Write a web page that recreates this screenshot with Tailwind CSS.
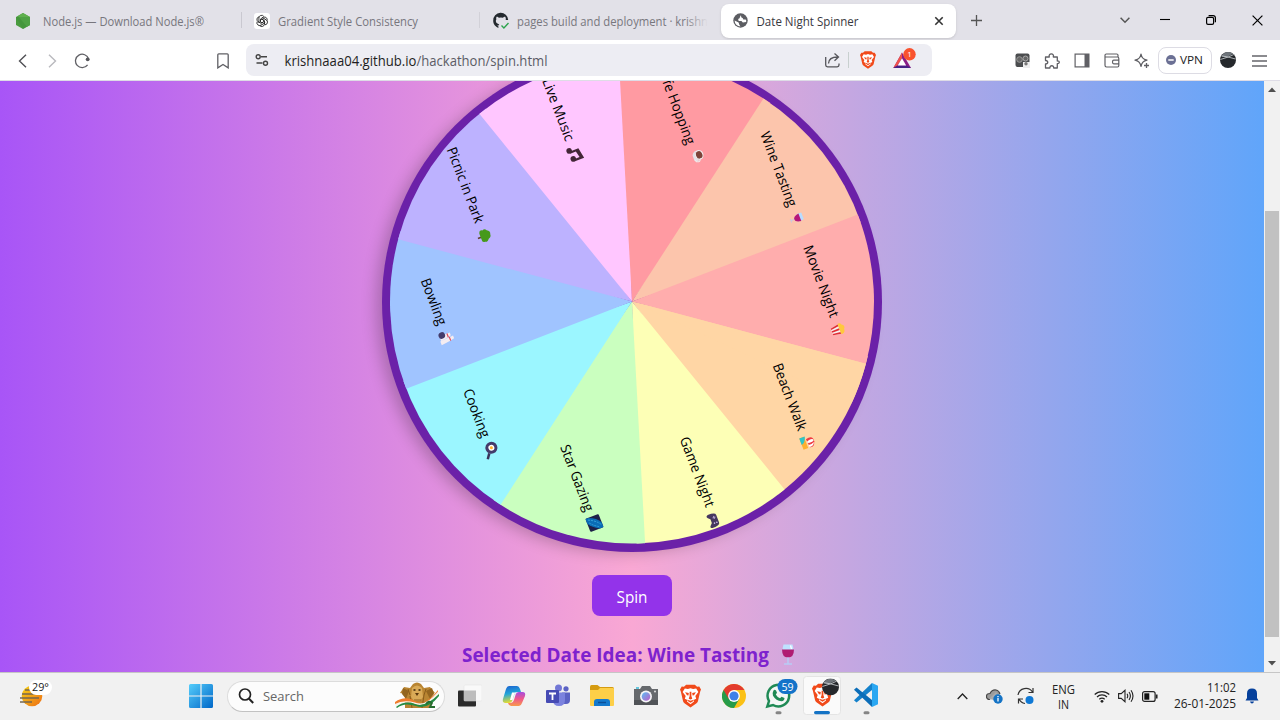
<!DOCTYPE html>
<html lang="en">
<head>
<meta charset="utf-8">
<title>Date Night Spinner</title>
<script src="https://cdn.jsdelivr.net/npm/@tailwindcss/browser@4"></script>
</head>
<body class="w-[1280px] h-[720px] overflow-hidden flex flex-col font-['Open_Sans','Noto_Sans',sans-serif] bg-white text-[#1b1b1f]">

<!-- Tab strip -->
<header class="h-10 shrink-0 flex items-center bg-[#e2e1e8] text-[12px] text-[#6d6c73]">
  <div class="w-[241px] h-10 flex items-center pl-[14px] pt-[2px]">
    <svg class="w-[18px] h-[18px] shrink-0" viewBox="0 0 18 18"><path d="M9 1l7 4v8l-7 4-7-4V5z" fill="#4a9b3f"/><path d="M9 1l7 4v8l-3 1.700L4 3.900z" fill="#5fb04e"/><path d="M2 5l7 12 7-4V5z" fill="#3d9139" opacity=".5"/></svg>
    <svg class="ml-[7px] w-[170px] h-5 overflow-visible" viewBox="0 0 170 20"><text x="4" y="14.500" font-size="12.300" fill="#77767d" textLength="161" lengthAdjust="spacingAndGlyphs">Node.js — Download Node.js®</text></svg>
  </div>
  <div class="w-px h-4 bg-[#c9c8d0]"></div>
  <div class="w-[237px] h-10 flex items-center pl-[12px] pt-[2px]">
    <svg class="w-4 h-4 shrink-0" viewBox="0 0 16 16"><rect width="16" height="16" rx="3" fill="#fff"/><g fill="none" stroke="#222" stroke-width=".85" stroke-linejoin="round"><g id="petal"><path d="M4.900 9.900V5A2.700 2.700 0 0 1 9.900 3.600M6.500 8.800V6L9.600 4.200A2.700 2.700 0 0 1 13.100 7.500"/></g><use href="#petal" transform="rotate(120 8 8)"/><use href="#petal" transform="rotate(240 8 8)"/><path d="M8 6.200l1.600.9v1.800L8 9.800l-1.600-.9V7.100z"/></g></svg>
    <svg class="ml-[8px] w-[150px] h-5 overflow-visible" viewBox="0 0 150 20"><text x="0" y="14.500" font-size="12.300" fill="#77767d" textLength="140" lengthAdjust="spacingAndGlyphs">Gradient Style Consistency</text></svg>
  </div>
  <div class="w-px h-4 bg-[#d2d1d8]"></div>
  <div class="w-[241px] h-10 flex items-center pl-[12px] pt-[2px]">
    <svg class="w-[18px] h-[18px] shrink-0" viewBox="0 0 18 18"><path d="M6.500 15.800C3.500 15 1.200 12 1.200 8.700A7.500 7.500 0 0 1 16.200 8h-2.500c.3-1.500 0-2.400-.5-3.200-1 0-1.900.6-2.300.9a8 8 0 0 0-4 0c-.4-.3-1.300-.9-2.300-.9-.5 1-.5 1.800-.2 2.400-1.400 2 .1 4.700 2.900 5-.4.4-.6.8-.7 1.300-.8.3-1.700.2-2.300-.9.500.1 1 2 2.200 1.900z" fill="#24292f"/><path d="M9.500 13.500l2.400 2.400 4.600-4.800" fill="none" stroke="#2da44e" stroke-width="1.400"/></svg>
    <svg class="ml-[6px] w-[196px] h-5 overflow-visible" viewBox="0 0 196 20"><defs><linearGradient id="fade"><stop offset=".88" stop-color="#77767d"/><stop offset="1" stop-color="#77767d" stop-opacity="0"/></linearGradient></defs><text x="1" y="14.500" font-size="12.300" fill="url(#fade)" textLength="191" lengthAdjust="spacingAndGlyphs">pages build and deployment · krishn</text></svg>
  </div>
  <div class="w-[235px] h-[34px] flex items-center rounded-lg bg-white pl-[12px] shadow-sm mt-px">
    <svg class="w-[15px] h-[15px] shrink-0" viewBox="0 0 16 16"><circle cx="8" cy="8" r="7.700" fill="#5c5d62"/><path d="M8.500 2.300C7.500 3.500 7.500 4.500 7 5.500L5.500 6.500 6 8.500h3L10.500 10l3.500-.5Q14.500 8 13.500 7H11l-.5-1.500L8.800 4.500zM1.700 8L6 10l.5 2 1.500 2.300A6.300 6.300 0 0 1 1.700 8z" fill="#fff"/></svg>
    <svg class="ml-[8px] w-[120px] h-5 overflow-visible" viewBox="0 0 120 20"><text x="0.500" y="14.500" font-size="12.300" fill="#38383e" textLength="102" lengthAdjust="spacingAndGlyphs">Date Night Spinner</text></svg>
    <svg class="ml-[58px] w-[10px] h-[10px]" viewBox="0 0 10 10"><path d="M1.300 1.300l7.400 7.400M8.700 1.300L1.300 8.700" stroke="#333" stroke-width="1.600"/></svg>
  </div>
  <svg class="ml-[15px] w-[11px] h-[11px]" viewBox="0 0 11 11"><path d="M5.500 0v11M0 5.500h11" stroke="#555" stroke-width="1.300"/></svg>
  <svg class="ml-[138px] w-[10px] h-[10px]" viewBox="0 0 10 10"><path d="M.6 2.800L5 7.200l4.400-4.400" fill="none" stroke="#555" stroke-width="1.500"/></svg>
  <svg class="ml-[30px] w-[10px] h-[10px]" viewBox="0 0 10 10"><path d="M0 4.500h10" stroke="#000" stroke-width="1.100"/></svg>
  <svg class="ml-[36px] w-[10px] h-[10px]" viewBox="0 0 10 10"><rect x=".6" y="2.400" width="7" height="7" rx="1.400" fill="none" stroke="#000" stroke-width="1.200"/><path d="M2.600.6h4.600A2.200 2.200 0 0 1 9.400 2.800v4.400" fill="none" stroke="#000" stroke-width="1.200"/></svg>
  <svg class="ml-[36px] w-[11px] h-[11px]" viewBox="0 0 11 11"><path d="M.6.600l9.800 9.800M10.400.600L.6 10.400" stroke="#000" stroke-width="1.200"/></svg>
</header>

<!-- Toolbar -->
<nav class="h-[41px] shrink-0 flex items-center bg-white border-b border-[#dedce6]">
  <div class="w-[246px] flex items-center pt-px">
    <svg class="ml-[18px] w-[9px] h-[14px]" viewBox="0 0 9 14"><path d="M8 .7L1.500 7 8 13.300" fill="none" stroke="#505055" stroke-width="1.400"/></svg>
    <svg class="ml-[21px] w-[9px] h-[14px]" viewBox="0 0 9 14"><path d="M1 .7L7.500 7 1 13.300" fill="none" stroke="#b9b9be" stroke-width="1.400"/></svg>
    <svg class="ml-[17px] w-[17px] h-[16px]" viewBox="0 0 17 16"><path d="M13.600 11.900A6.700 6.700 0 1 1 14.600 6" fill="none" stroke="#606065" stroke-width="1.300"/><circle cx="13.700" cy="6.300" r="1.900" fill="#55555a"/></svg>
    <svg class="ml-[126px] w-[12px] h-[16px]" viewBox="0 0 12 16"><path d="M.8 1.800q0-1 1-1h8.400q1 0 1 1v13.100L6 11.500.8 14.900z" fill="none" stroke="#606065" stroke-width="1.300"/></svg>
  </div>
  <div class="w-[686px] h-8 rounded-lg bg-[#ededf3] flex items-center">
    <svg class="ml-[9px] w-[14px] h-[14px]" viewBox="0 0 14 14"><g fill="none" stroke="#444" stroke-width="1.400"><circle cx="3.200" cy="3.800" r="2"/><path d="M5.800 3.800H12M1.500 10h6"/><circle cx="10.500" cy="10.200" r="2"/></g></svg>
    <svg class="ml-[15px] w-[280px] h-6 overflow-visible" viewBox="0 0 280 24"><text x="0.500" y="17.700" font-size="14" fill="#1e1e22" textLength="263" lengthAdjust="spacingAndGlyphs">krishnaaa04.github.io<tspan fill="#5c5c66">/hackathon/spin.html</tspan></text></svg>
    <svg class="ml-[260px] w-[17px] h-[16px]" viewBox="0 0 17 16"><path d="M1.700 5v8q0 1.800 1.800 1.800h9.700q1.800 0 1.800-1.800v-1.500M4.500 11.500c.2-4.700 3-6.500 9.200-6.500M10.500 1.500L14.500 5l-4 3.800" fill="none" stroke="#55555a" stroke-width="1.300"/></svg>
    <div class="ml-[7px] w-px h-4 bg-[#c8d0cf]"></div>
    <svg class="ml-[11px] w-[16px] h-[18px]" viewBox="0 0 24 26"><g id="lion"><path d="M7 0h10l2.500 2.300 2.500-.3L24 5.500l-1 2.700L20.500 19q-.5 1.700-2 2.700L12 26l-6.500-4.300q-1.500-1-2-2.700L1 8.200 0 5.500 2 2l2.500.3z" fill="#f14a1a"/><path d="M5.500 4.500L9 5l3-1 3 1 3.500-.5 2.500 4-3.500 4.500 1 3-3 1.500 .5 1.800L12 22.300l-4-3 .5-1.800-3-1.500 1-3L3 8.500z" fill="#fff"/><path d="M5.800 8.800l4.300.8L9.600 12.300 8 12zM18.200 8.800l-4.300.8.5 2.700 1.600-.3zM11 8h2v5l1 3-2 1-2-1 1-3zM8.200 17.200l3.800 1.300 3.800-1.300-1 1.700-2.800 1.800-2.800-1.800z" fill="#f14a1a"/></g></svg>
    <svg class="ml-[15px] w-[26px] h-[24px]" viewBox="0 0 26 24"><path d="M11 4.500L2.300 20H20z" fill="#8b1d86"/><path d="M11 4.500L2.300 20l4.200-2.400L11 10z" fill="#f0524b"/><path d="M2.300 20l4.200-2.400h9.200L20 20z" fill="#472286"/><path d="M11 10.300l-4.300 7.200h8.500z" fill="#fff"/><circle cx="18.500" cy="6.300" r="6.200" fill="#f9522e"/><text x="18.500" y="9.300" font-size="8" fill="#fff" text-anchor="middle">1</text></svg>
  </div>
  <div class="ml-[75px] flex pt-px">
    <div class="w-[30px] flex justify-center"><svg class="w-[15px] h-[15px]" viewBox="0 0 15 15"><rect x=".5" y=".5" width="14" height="13.500" rx="2" fill="#4b4d4f"/><circle cx="4.500" cy="6.500" r="2.800" fill="#666" stroke="#999"/><circle cx="10.500" cy="5.500" r="2.500" fill="#666" stroke="#aaa"/><path d="M8 9h7v6H8z" fill="#eee"/><circle cx="11" cy="10.700" r="1.700" fill="#777"/></svg></div>
    <div class="w-[30px] flex justify-center"><svg class="w-[16px] h-[16px]" viewBox="0 0 16 16"><path d="M1.500 4h3.800C4.600 1.800 6 .8 7.300.8s2.700 1 2 3.200h4v4c2.800-.5 2.500 3 0 2.600V15H9.700c.2-3-4-3-3.800 0H1.500v-4c3 0 3-3.500 0-3.500z" fill="none" stroke="#606065" stroke-width="1.300" stroke-linejoin="round"/></svg></div>
    <div class="w-[30px] flex justify-center"><svg class="w-[16px] h-[15px]" viewBox="0 0 16 15"><rect x="1.100" y="1.100" width="13.800" height="12.800" fill="none" stroke="#606065" stroke-width="1.200"/><path d="M10.500 1H15v13h-4.500z" fill="#606065"/></svg></div>
    <div class="w-[30px] flex justify-center"><svg class="w-[16px] h-[15px]" viewBox="0 0 16 15"><g fill="none" stroke="#606065" stroke-width="1.200"><path d="M14 4.500V2.300Q14 1 12.700 1H2.300Q1 1 1 2.300v10Q1 14 2.500 14h11q1.300 0 1.300-1.500v-7q0-1.500-1.300-1.500H1"/><path d="M15 7.200H9.800q-1.300 0-1.300 1.800t1.300 1.800H15"/></g></svg></div>
    <div class="w-[30px] flex justify-center"><svg class="w-[16px] h-[16px]" viewBox="0 0 16 16"><path d="M7 1.200C7.700 5 9 6.300 13 7.200 9 8 7.700 9.500 7 13.300 6.300 9.500 5 8 1 7.200 5 6.300 6.300 5 7 1.200z" fill="none" stroke="#606065" stroke-width="1.300" stroke-linejoin="round"/><path d="M12.500 10v5M10 12.500h5" stroke="#606065" stroke-width="1.300"/></svg></div>
  </div>
  <div class="ml-px w-[54px] h-[27px] border border-[#dddce4] rounded-lg flex items-center pl-[7px]">
    <svg class="w-[10px] h-[10px]" viewBox="0 0 10 10"><circle cx="5" cy="5" r="5" fill="#6b7094"/><path d="M2.300 5h5.400" stroke="#fff" stroke-width="1.500"/></svg>
    <svg class="ml-[4px] w-[25px] h-4 overflow-visible" viewBox="0 0 25 16"><text x="0" y="12" font-size="11.500" fill="#222" textLength="23" lengthAdjust="spacingAndGlyphs">VPN</text></svg>
  </div>
  <div class="w-8 flex justify-center"><svg class="w-4 h-4" viewBox="0 0 16 16"><g id="avatar"><circle cx="8" cy="8" r="8" fill="#25282c"/><path d="M1 4.500A8 8 0 0 1 13 1.800L6 5.500z" fill="#6f757b"/><path d="M.3 7.500l8-2.500 5.500-2.500M2 4l6 1 7.500 2" fill="none" stroke="#c9ced2" stroke-width=".8"/></g></svg></div>
  <div class="w-[30px] flex justify-center pt-px"><svg class="w-[15px] h-[12px]" viewBox="0 0 15 12"><path d="M0 1h15M0 6h15M0 11h15" stroke="#66666b" stroke-width="1.300"/></svg></div>
</nav>

<!-- Page -->
<div class="h-[591px] shrink-0 flex">
  <main class="w-[1264px] h-full overflow-hidden flex flex-col items-center bg-[linear-gradient(to_right,#a855f7,#f9a8d4,#60a5fa)]">
    <div class="-mt-[29px] w-[500px] h-[500px] shrink-0 rounded-full bg-[#6b21a8] shadow-[-9px_4px_15px_-3px_rgba(0,0,0,0.22)]">
      <svg class="w-[500px] h-[500px]" viewBox="382 52 500 500">
        <g id="slices"></g>
        <g id="labels" font-size="14" fill="#000"></g>
        <g transform="translate(697.500 156) rotate(69)"><path d="M-4.500-3.500h8.500q2 6-1 8h-5q-5-2-2.500-8z" fill="#e4e1e6"/><ellipse cx="-.5" cy="-2" rx="4.300" ry="3.700" fill="#7c4339" stroke="#f5f2f5"/><path d="M4-1q3 0 1 4l-2 1" fill="none" stroke="#eee"/></g>
        <g transform="translate(798 218) rotate(69)"><path d="M-4-5h7q2 7-3 8-5-1-4-8z" fill="#b8dcff"/><path d="M-4-2h8q-1 6-4 6t-4-6z" fill="#b5177b"/><path d="M0 4v3M-2 7.500h4" stroke="#c8c8e0"/></g>
        <g transform="translate(838.500 329.500) rotate(69)"><path d="M-5-1h10L3.500 7h-7z" fill="#f8f0ee"/><path d="M-5-1h2l.9 8h-1.500zM-1-1h2L.7 7H-.7zM5-1H3L2.100 7h1.500z" fill="#e02e36"/><path d="M-5.500-1q-1-3 2-3.500 2-3.500 5-1 4 0 4 4.500z" fill="#ffc83d"/></g>
        <g transform="translate(807 442) rotate(69)"><path d="M-6 1h12v5H-6z" fill="#ffb02e"/><path d="M-6 0Q0 2 1 6h-7z" fill="#31c4c8"/><path d="M-3 0q-2-8 5-7 6 2 4 6z" fill="#f03c42"/><path d="M-.5-.5q-2-6 1-6.500 2 2 .5 7zM3.500-.5q.5-3-1-6 4 2 3 6z" fill="#fff"/></g>
        <g transform="translate(713 520.500) rotate(69)"><path d="M-4-5h8q3 0 3 8-1 3-3 1L2 2h-4l-2 2q-2 2-3-1 0-8 3-8z" fill="#46375f"/><path d="M-4-2h3M-2.500-3.500v3" stroke="#b6a5d0"/><circle cx="3" cy="-3" r=".8" fill="#c9b7e6"/><circle cx="3" cy="-.5" r=".8" fill="#c9b7e6"/></g>
        <g transform="translate(594.500 523) rotate(69)"><rect x="-7" y="-7" width="14" height="14" rx="1" fill="#1d1f48"/><path d="M-7 7V4Q-4-4 2-7h5V-3Q3 4-2 7z" fill="#0a6cb6"/><path d="M-5 5Q-2-2 4-6M-2 5Q2 2 5-3" fill="none" stroke="#39a5dd" stroke-width=".8" stroke-dasharray="2 1"/></g>
        <g transform="translate(491 449.500) rotate(69)"><path d="M3 3l5 3.500" stroke="#38335a" stroke-width="2.500"/><circle cx="-1.500" cy="-1" r="6" fill="#433b6b"/><circle cx="-1.500" cy="-1" r="3" fill="#fff"/><circle cx="-1.500" cy="-1" r="1.500" fill="#ffb02e"/></g>
        <g transform="translate(446.500 338) rotate(69)"><path d="M0-7h3l1 5 1 9h-4zM-4-5h3l1 4 1 7h-5z" fill="#f5edf1"/><path d="M0-3h4M-4-2h4" stroke="#e14a58" stroke-width="1.200"/><circle cx="-4" cy="3.500" r="3.300" fill="#433b6b"/></g>
        <g transform="translate(484.500 236) rotate(69)"><path d="M-.8 2h1.600v5h-1.600z" fill="#63412f"/><path d="M-4 4q-3.500-1-2-4-1.500-3 1.500-4 2-3.500 5-2 3 0 3.500 3 3 2 1.500 4.500 0 3-3 2.500z" fill="#46991b"/></g>
        <g transform="translate(575 153.500) rotate(69)" fill="#432637"><circle cx="-4.500" cy="4.500" r="2.800"/><circle cx="4.500" cy="3.500" r="2.800"/><path d="M-3.700 4.500V-5L7.300-7V3.500H5V-3L-1.500-1.500v6z"/></g>
      </svg>
    </div>
    <button class="mt-[23px] w-[80px] h-[41px] shrink-0 rounded-lg bg-[#9333ea] flex items-center justify-center">
      <svg class="w-8 h-6 overflow-visible" viewBox="0 0 32 24"><text x="0.500" y="18.500" font-size="16" fill="#fff" textLength="31" lengthAdjust="spacingAndGlyphs">Spin</text></svg>
    </button>
    <h2 class="mt-[23px] flex items-center shrink-0">
      <svg class="w-[340px] h-8 overflow-visible" viewBox="0 0 340 32"><text x="0" y="22.500" font-size="19.800" font-weight="700" fill="#7e22ce" textLength="307" lengthAdjust="spacingAndGlyphs">Selected Date Idea: Wine Tasting</text><g transform="translate(326 15.500)"><path d="M-4.500-10h9Q8 2 0 3-8 2-4.500-10z" fill="#bfe2ff"/><path d="M-6-5H6Q6 3 0 3T-6-5z" fill="#b01c72"/><path d="M0 3v6M-4 9.500h8" stroke="#b8cbf5" stroke-width="1.500"/><path d="M2.500-9l1 3.500" stroke="#fff" stroke-width="1.200"/></g></svg>
    </h2>
  </main>
  <aside class="w-4 h-full bg-[#f1f1f1] flex flex-col items-center justify-between">
    <svg class="mt-[6px] w-2 h-[5px] shrink-0" viewBox="0 0 8 5"><path d="M0 5l4-4.500L8 5z" fill="#505050"/></svg>
    <div class="mt-[119px] mb-auto w-[14px] h-[426px] bg-[#c1c1c1]"></div>
    <svg class="mb-[6px] w-2 h-[5px] shrink-0" viewBox="0 0 8 5"><path d="M0 0l4 4.500L8 0z" fill="#505050"/></svg>
  </aside>
</div>

<!-- Taskbar -->
<footer class="h-12 shrink-0 flex items-center bg-[#f1f1f1] border-t border-[#c6c6c6] pb-px">
  <div class="w-[187px] pl-[18px]">
    <svg class="w-[36px] h-[32px]" viewBox="18 680 36 32"><defs><linearGradient id="sun" x2="1" y2="1"><stop stop-color="#f6d415"/><stop offset="1" stop-color="#ed6c16"/></linearGradient></defs><circle cx="32" cy="696" r="10.300" fill="url(#sun)"/><path d="M25 690h12M22 694h13M20 698h19M20 702h12" stroke="#75674f" stroke-width="1.400"/><rect x="29" y="680" width="23" height="15" rx="7.500" fill="#fff"/><text x="32" y="691" font-size="11" fill="#222" textLength="17" lengthAdjust="spacingAndGlyphs">29°</text></svg>
  </div>
  <svg class="ml-[2px] w-6 h-6" viewBox="0 0 24 24"><defs><linearGradient id="win" x2="1" y2="1"><stop stop-color="#55cdfb"/><stop offset="1" stop-color="#0067c8"/></linearGradient></defs><path d="M1.500 0H11.400v11.400H0V1.500Q0 0 1.500 0zM12.600 0h9.900Q24 0 24 1.500v9.900H12.600zM0 12.600h11.400V24H1.500Q0 24 0 22.500zM12.600 12.600H24v9.900q0 1.500-1.500 1.500h-9.900z" fill="url(#win)"/></svg>
  <div class="ml-[14px] w-[218px] h-[31px] rounded-full bg-[#fcfcfc] border border-[#dcdcdc] border-b-[#c2c2c2] flex items-center">
    <svg class="ml-[10px] w-[16px] h-[16px]" viewBox="0 0 16 16"><circle cx="7" cy="6.500" r="5.500" fill="none" stroke="#222" stroke-width="1.700"/><path d="M10.800 10.500l4.400 4.500" stroke="#222" stroke-width="2"/></svg>
    <svg class="ml-[9px] w-[44px] h-5" viewBox="0 0 44 20"><text x="0" y="15" font-size="13.500" fill="#666" textLength="41" lengthAdjust="spacingAndGlyphs">Search</text></svg>
    <svg class="ml-[88px] w-[46px] h-7" viewBox="0 0 46 28"><path d="M10 26V12l-5-1 4-6 6 1 3-4q4-3 8 0l3 4 6-1 5 6-4 2v13z" fill="#b98532"/><path d="M17 6q5-5 10 0l1 9-3 4h-6l-3-4z" fill="#d9aa57"/><path d="M8 6l6 3-3 8-4-5zM37 6l-6 3 4 8 4-5z" fill="#94651f"/><path d="M18.500 8h2M23.500 8h2" stroke="#3d260b" stroke-width="1.300"/><path d="M20 11h4l-2 3z" fill="#5b390e"/><path d="M15 14l2 12M29 13l-2 13M19 18h7M13 7l2 6M31 7l-2 6" fill="none" stroke="#855719" stroke-width=".9"/><path d="M0 21q10-7 20-1t23-11l1 4q-12 13-24 9T1 25z" fill="#f7f4ec"/><path d="M0 20q10-7 20-1t23-11v1.500q-11 14-23 11T0 22z" fill="#ef7d2e"/><path d="M1 25q9-7 19-3t24-10v2q-11 14-23 10T2 26z" fill="#238b43"/><path d="M31 22q3-4 6-1l-2 4h5" fill="none" stroke="#276c2f" stroke-width="1.800"/></svg>
  </div>
  <div class="ml-[3px] h-full flex items-center">
    <div class="w-11 h-10 flex items-center justify-center"><svg class="w-6 h-6" viewBox="0 0 24 24"><rect x="0" y="6.500" width="18" height="16" rx="1" fill="#2b2b2b"/><rect x="6" y="1" width="18" height="16" rx="1" fill="#f9f9f9" stroke="#e2e2e2" stroke-width=".5"/><rect x="6" y="6.500" width="12" height="10.500" fill="#bdbdbd"/></svg></div>
    <div class="w-11 h-10 flex items-center justify-center"><svg class="w-6 h-6" viewBox="0 0 24 24"><defs><linearGradient id="cpa" x2=".2" y2="1"><stop stop-color="#1b5fd0"/><stop offset=".5" stop-color="#22a5d8"/><stop offset="1" stop-color="#e5dc32"/></linearGradient><linearGradient id="cpb" x2="0" y2="1"><stop stop-color="#a54ee0"/><stop offset=".5" stop-color="#f0588a"/><stop offset="1" stop-color="#f79a4b"/></linearGradient></defs><path d="M7 2h8q2 0 3 3l1 3h-4q-2 0-3 3l-1.500 5Q9.700 19 7 19H3.500Q0 19 1 15l3-10Q5 2 7 2z" fill="url(#cpa)"/><path d="M17 22H9q-2 0-3-3h3q2 0 3-3l1.500-5q.8-3 3.500-3h3.500Q24 8 23 12l-3 7q-1 3-3 3z" fill="url(#cpb)"/><path d="M10 8.500h4.500q-2 .5-2.500 2.500l-1.500 5H8z" fill="#fff"/></svg></div>
    <div class="w-11 h-10 flex items-center justify-center"><svg class="w-6 h-6" viewBox="0 0 24 24"><circle cx="12.500" cy="4" r="3.500" fill="#7277d5"/><circle cx="20" cy="4.800" r="2.600" fill="#5b62c4"/><path d="M16 8.500h8V16q0 4-4 4h-3z" fill="#5b62c4"/><path d="M7 8.500h12V16q0 6-6 6t-6-6z" fill="#7b82de"/><rect y="6" width="13" height="13" rx="1" fill="#464bb4"/><path d="M3 9.500h7M6.500 9.500V16" stroke="#fff" stroke-width="1.800"/></svg></div>
    <div class="w-11 h-10 flex items-center justify-center"><svg class="w-6 h-6" viewBox="0 0 24 24"><path d="M0 3q0-2 1.500-2h6L10 3h12.500Q24 3 24 4.500V10H0z" fill="#d59b10"/><path d="M0 6h8l2-2h13q1 0 1 1v16q0 1-1 1H1q-1 0-1-1z" fill="#fdcf48"/><path d="M4 22v-4q0-3 3-3h10q3 0 3 3v4z" fill="#1379cd"/><path d="M8 18.500h8" stroke="#0a4f99" stroke-width="1.400"/></svg></div>
    <div class="w-11 h-10 flex items-center justify-center"><svg class="w-6 h-6" viewBox="0 0 24 24"><defs><linearGradient id="lens" x2="1" y2="1"><stop stop-color="#58bff5"/><stop offset="1" stop-color="#c35bc7"/></linearGradient></defs><path d="M0 5h6l2-3h8l2 3h6v16H0z" fill="#66696d"/><path d="M0 16h24v5H0z" fill="#505357"/><circle cx="12" cy="12.500" r="6" fill="#f5f5f7"/><circle cx="12" cy="12.500" r="4.300" fill="url(#lens)"/><path d="M2 4h3" stroke="#37b7d6" stroke-width="1.500"/><circle cx="21" cy="7.500" r=".9" fill="#eee"/></svg></div>
    <div class="w-11 h-10 flex items-center justify-center"><svg class="w-[21px] h-6" viewBox="0 0 24 26"><use href="#lion"/></svg></div>
    <div class="w-11 h-10 flex items-center justify-center"><svg class="w-6 h-6" viewBox="0 0 24 24"><circle cx="12" cy="12" r="12" fill="#fbc116"/><path d="M1.600 6A12 12 0 0 0 12 24l5.200-9L12 12 1.600 6z" fill="#269b49"/><path d="M1.600 6A12 12 0 0 1 22.400 6H12v6l-5.200 3z" fill="#e33b2e"/><circle cx="12" cy="12" r="5.900" fill="#fff"/><circle cx="12" cy="12" r="4.600" fill="#3d7fe8"/></svg></div>
    <div class="w-11 h-10 flex items-center justify-center"><svg class="w-[40px] h-[40px]" viewBox="758 677 40 40"><path d="M767.300 707.500l1.700-5.500a10.800 10.800 0 1 1 4 4z" fill="#f4f7f6" stroke="#1f8a55" stroke-width="2.500"/><path d="M773.500 691.500q1-1.500 2.500 0l1 2.200-1.200 1.700q1.500 2.800 4.200 3.800l1.500-1.500 3 1.300q0 3-3 3.300-5.500-.3-8.500-5.500-1-2.800.5-5.300z" fill="#1f8a55"/><rect x="777.500" y="680" width="20" height="15" rx="7.500" fill="#1373c9"/><text x="787.500" y="692" font-size="11" fill="#fff" text-anchor="middle" textLength="12" lengthAdjust="spacingAndGlyphs">59</text><rect x="775.500" y="712.300" width="6" height="3" rx="1.500" fill="#858585"/></svg></div>
    <div class="w-11 h-10 flex items-center justify-center"><svg class="w-[40px] h-[40px]" viewBox="802 677 40 40"><rect x="803.500" y="677.500" width="37" height="38" rx="3" fill="#fafafa" stroke="#e4e4e4"/><svg x="812" y="684" width="21" height="24" viewBox="0 0 24 26"><use href="#lion"/></svg><svg x="822" y="679.500" width="17" height="17" viewBox="0 0 16 16"><use href="#avatar"/></svg><rect x="814" y="712" width="16" height="3.200" rx="1.600" fill="#1473c5"/></svg></div>
    <div class="w-11 h-10 flex items-center justify-center"><svg class="w-[40px] h-[40px]" viewBox="846 677 40 40"><path d="M872 684l6 2.800v18.400l-6 2.800z" fill="#2aa7f2"/><path d="M872 684v7l-15.500 12.500-2.500-2.200z" fill="#1481cb"/><path d="M872 708v-7l-15.500-12.500-2.500 2.200z" fill="#0b6db8"/><rect x="863.500" y="712.300" width="6" height="3" rx="1.500" fill="#858585"/></svg></div>
  </div>
  <svg class="ml-[69px] w-[11px] h-[8px]" viewBox="0 0 11 8"><path d="M.7 7l4.800-5 4.800 5" fill="none" stroke="#222" stroke-width="1.300"/></svg>
  <svg class="ml-[18px] w-[18px] h-4" viewBox="0 0 18 16"><path d="M4 11.500q-3.500 0-3.500-3t3.500-3q2-4 6-3.500 3 .5 4 4" fill="#9b9b9b" stroke="#444" stroke-width="1.200"/><path d="M3 11l7-7 3 4-5 4z" fill="#aaa"/><circle cx="12" cy="11" r="4.700" fill="#1473c5"/><path d="M12 10v3.500M12 8v1.200" stroke="#fff" stroke-width="1.300"/></svg>
  <svg class="ml-[13px] w-[18px] h-[18px]" viewBox="0 0 18 18"><path d="M1 8A8 8 0 0 1 15.500 5M16 1v4.500h-4.500M8 16.500A8 8 0 0 1 2 12M1.500 16.500V12H6" fill="none" stroke="#333" stroke-width="1.200"/><circle cx="12.500" cy="13" r="4" fill="#0f79d5"/></svg>
  <svg class="ml-[12px] w-[32px] h-[34px]" viewBox="0 0 32 34"><g fill="#222" font-size="12" text-anchor="middle"><text x="16.500" y="14.500" textLength="23" lengthAdjust="spacingAndGlyphs">ENG</text><text x="16.500" y="29.500" textLength="11" lengthAdjust="spacingAndGlyphs">IN</text></g></svg>
  <svg class="ml-[15px] w-[16px] h-[13px]" viewBox="0 0 16 13"><g fill="none" stroke="#222" stroke-width="1.200"><path d="M.7 4.500a10.500 10.500 0 0 1 14.600 0M3 7a7 7 0 0 1 10 0M5.300 9.300a4 4 0 0 1 5.400 0"/></g><circle cx="8" cy="11.300" r="1.400" fill="#222"/></svg>
  <svg class="ml-[8px] w-[16px] h-[14px]" viewBox="0 0 16 14"><g fill="none" stroke="#222" stroke-width="1.100"><path d="M.6 4.600h2.600L7 1.300v11.400L3.200 9.400H.6z"/><path d="M9 4.800q1.500 2.200 0 4.400M11 3q2.800 4 0 8M13 1.200q4 5.800 0 11.600"/></g></svg>
  <svg class="ml-[8px] w-[16px] h-[11px]" viewBox="0 0 16 11"><rect x=".6" y=".6" width="12.500" height="9.800" rx="2" fill="none" stroke="#222" stroke-width="1.200"/><rect x="2.300" y="2.300" width="5" height="6.400" fill="#111"/><path d="M14.700 3.500v4" stroke="#222" stroke-width="1.700"/></svg>
  <svg class="ml-[13px] w-[66px] h-[34px]" viewBox="0 0 66 34"><g fill="#222" font-size="12" text-anchor="end"><text x="65" y="13" textLength="29" lengthAdjust="spacingAndGlyphs">11:02</text><text x="65" y="29" textLength="62" lengthAdjust="spacingAndGlyphs">26-01-2025</text></g></svg>
  <svg class="ml-[8px] w-[14px] h-[16px]" viewBox="0 0 14 16"><path d="M7 .5q5 0 5 5V10l1.500 2.500H.5L2 10V5.500q0-5 5-5zM5 13.500h4q-.5 2-2 2t-2-2z" fill="#06419c"/></svg>
</footer>

<script>
  const cx = 632, cy = 301.6, r = 242, start = 14.9;
  const colors = ['#ffd6a5', '#fdffb6', '#caffbf', '#9bf6ff', '#a0c4ff', '#bdb2ff', '#ffc6ff', '#ff9aa2', '#fcc5ac', '#ffadad'];
  const pt = d => (cx + r * Math.cos(d * Math.PI / 180)).toFixed(2) + ' ' + (cy + r * Math.sin(d * Math.PI / 180)).toFixed(2);
  // Each slice runs a little under the next one, so no seam shows between them.
  document.getElementById('slices').innerHTML = colors.map((c, i) => {
    const a = start + i * 36, end = i < 9 ? a + 38 : a + 36;
    return `<path d="M${cx} ${cy}L${pt(i ? a : a - 2)}A${r} ${r} 0 0 1 ${pt(end)}Z" fill="${c}"/>`;
  }).join('') + `<path d="M${cx} ${cy}L${pt(start)}A${r} ${r} 0 0 1 ${pt(start + 10)}Z" fill="${colors[0]}"/>`;
  const labels = [
    ['Picnic in Park', 446.5, 149.5, 80], ['Live Music', 542, 80.5, 66], ['Cafe Hopping', 656.5, 67, 84],
    ['Wine Tasting', 760, 134, 79], ['Movie Night', 803, 247.5, 76], ['Beach Walk', 772.5, 365.5, 71],
    ['Game Night', 679.5, 439, 74], ['Star Gazing', 560, 447, 70], ['Cooking', 463, 391, 51], ['Bowling', 420.5, 280.5, 49]
  ];
  document.getElementById('labels').innerHTML = labels.map(([t, x, y, w]) =>
    `<text transform="translate(${x} ${y}) rotate(69)" textLength="${w}" lengthAdjust="spacingAndGlyphs">${t}</text>`).join('');
</script>
</body>
</html>
